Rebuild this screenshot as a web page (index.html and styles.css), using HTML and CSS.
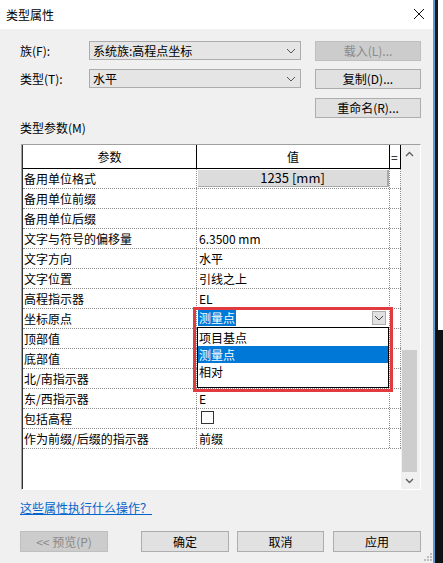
FILE: index.html
```html
<!DOCTYPE html>
<html lang="zh-CN">
<head>
<meta charset="utf-8">
<title>类型属性</title>
<link rel="stylesheet" href="styles.css">
</head>
<body>
<div class="screen">
  <div class="dialog">
    <div class="titlebar">
      <span class="title">类型属性</span>
      <svg class="close" width="12" height="12" viewBox="0 0 12 12"><path d="M1 1L11 11M11 1L1 11" stroke="#111" stroke-width="1" fill="none"/></svg>
    </div>
    <div class="content">
      <div class="row r1">
        <span class="label">族(F):</span>
        <div class="combo"><span>系统族:高程点坐标</span><svg width="10" height="6" viewBox="0 0 10 6"><path d="M1 1L5 5L9 1" stroke="#555" stroke-width="1" fill="none"/></svg></div>
        <div class="btn disabled side">载入(L)...</div>
      </div>
      <div class="row r2">
        <span class="label">类型(T):</span>
        <div class="combo"><span>水平</span><svg width="10" height="6" viewBox="0 0 10 6"><path d="M1 1L5 5L9 1" stroke="#555" stroke-width="1" fill="none"/></svg></div>
        <div class="btn side">复制(D)...</div>
      </div>
      <div class="row r3">
        <div class="btn side rename">重命名(R)...</div>
      </div>
      <div class="section-label">类型参数(M)</div>
      <div class="grid-wrap">
        <div class="grid">
          <div class="grow head"><div class="c1">参数</div><div class="c2 center">值</div><div class="c3">=</div></div>
          <div class="grow"><div class="c1">备用单位格式</div><div class="c2"><div class="unitbox">1235 [mm]</div></div><div class="c3"></div></div>
          <div class="grow"><div class="c1">备用单位前缀</div><div class="c2"></div><div class="c3"></div></div>
          <div class="grow"><div class="c1">备用单位后缀</div><div class="c2"></div><div class="c3"></div></div>
          <div class="grow"><div class="c1">文字与符号的偏移量</div><div class="c2">6.3500 mm</div><div class="c3"></div></div>
          <div class="grow"><div class="c1">文字方向</div><div class="c2">水平</div><div class="c3"></div></div>
          <div class="grow"><div class="c1">文字位置</div><div class="c2">引线之上</div><div class="c3"></div></div>
          <div class="grow"><div class="c1">高程指示器</div><div class="c2">EL</div><div class="c3"></div></div>
          <div class="grow"><div class="c1">坐标原点</div><div class="c2 editor"><span class="sel">测量点</span><span class="dropbtn"><svg width="10" height="6" viewBox="0 0 10 6"><path d="M1 1L5 5L9 1" stroke="#444" stroke-width="1" fill="none"/></svg></span></div><div class="c3"></div></div>
          <div class="grow"><div class="c1">顶部值</div><div class="c2"></div><div class="c3"></div></div>
          <div class="grow"><div class="c1">底部值</div><div class="c2"></div><div class="c3"></div></div>
          <div class="grow"><div class="c1">北/南指示器</div><div class="c2"></div><div class="c3"></div></div>
          <div class="grow"><div class="c1">东/西指示器</div><div class="c2">E</div><div class="c3"></div></div>
          <div class="grow"><div class="c1">包括高程</div><div class="c2"><span class="check"></span></div><div class="c3"></div></div>
          <div class="grow"><div class="c1">作为前缀/后缀的指示器</div><div class="c2">前缀</div><div class="c3"></div></div>
          <div class="dropdown-list">
            <div class="item">项目基点</div>
            <div class="item active">测量点</div>
            <div class="item">相对</div>
          </div>
          <div class="redbox"></div>
        </div>
        <div class="scrollbar">
          <div class="arrow"><svg width="9" height="6" viewBox="0 0 9 6"><path d="M1 5L4.5 1.5L8 5" stroke="#606060" stroke-width="1.4" fill="none"/></svg></div>
          <div class="track"></div>
          <div class="thumb"></div>
          <div class="arrow"><svg width="9" height="6" viewBox="0 0 9 6"><path d="M1 1L4.5 4.5L8 1" stroke="#606060" stroke-width="1.4" fill="none"/></svg></div>
        </div>
      </div>
      <a class="help" href="#">这些属性执行什么操作？</a>
      <div class="footer">
        <div class="btn disabled b-preview">&lt;&lt; 预览(P)</div>
        <div class="btn b-ok">确定</div>
        <div class="btn b-cancel">取消</div>
        <div class="btn b-apply">应用</div>
      </div>
      <svg class="grip" width="9" height="9" viewBox="0 0 9 9">
        <rect x="6" y="0" width="2" height="2" fill="#bdbdbd"/>
        <rect x="3" y="3" width="2" height="2" fill="#bdbdbd"/>
        <rect x="6" y="3" width="2" height="2" fill="#bdbdbd"/>
        <rect x="0" y="6" width="2" height="2" fill="#bdbdbd"/>
        <rect x="3" y="6" width="2" height="2" fill="#bdbdbd"/>
        <rect x="6" y="6" width="2" height="2" fill="#bdbdbd"/>
      </svg>
    </div>
  </div>
  <div class="edge"></div>
</div>
</body>
</html>
```

FILE: styles.css
```css
* { box-sizing: border-box; }
html, body { margin: 0; padding: 0; }
body {
  font-family: "Noto Sans CJK SC", "Noto Sans", sans-serif;
  font-size: 12px;
  color: #000;
  background: #fff;
}
.screen {
  display: flex;
  width: 443px;
  height: 563px;
  overflow: hidden;
}
.dialog {
  width: 433px;
  height: 563px;
  display: flex;
  flex-direction: column;
}
.edge {
  width: 10px;
  height: 563px;
  border-left: 2px solid #5b9bd8;
  background: linear-gradient(to right, #1b1b1b 3px, #ffffff 3px) top left / 100% 330px no-repeat, #111;
}
.titlebar {
  height: 29px;
  background: #fff;
  display: flex;
  align-items: center;
  justify-content: space-between;
  padding-left: 6px;
  padding-right: 8px;
}
.title { font-size: 12px; line-height: 16px; }
.close { display: block; margin-top: -2px; }
.content {
  flex: 1;
  background: #f0f0f0;
  padding: 12px 0 0 20px;
  position: relative;
}
.row {
  display: flex;
  align-items: flex-start;
  height: 20px;
}
.r2 { margin-top: 8px; }
.r3 { margin-top: 9px; }
.label {
  width: 69px;
  line-height: 19px;
}
.combo {
  width: 212px;
  height: 19px;
  background: #e5e5e5;
  border: 1px solid #acacac;
  display: flex;
  align-items: center;
  justify-content: space-between;
  padding: 0 4px 0 3px;
  line-height: 17px;
}
.combo svg { display: block; }
.btn {
  height: 20px;
  background: #e1e1e1;
  border: 1px solid #adadad;
  display: flex;
  align-items: center;
  justify-content: center;
  line-height: 18px;
}
.btn.disabled {
  background: #cccccc;
  border-color: #bfbfbf;
  color: #8a8a8a;
}
.side { width: 106px; margin-left: 14px; }
.rename { margin-left: 295px; }
.section-label {
  margin-top: 2px;
  line-height: 16px;
}
.grid-wrap {
  margin-top: 8px;
  margin-left: 1px;
  width: 400px;
  height: 346px;
  border-top: 1px solid #a0a0a0;
  border-left: 1px solid #a0a0a0;
  border-right: 1px solid #ffffff;
  border-bottom: 1px solid #ffffff;
  display: flex;
  padding-right: 2px;
}
.grid {
  width: 379px;
  height: 100%;
  background: #fff;
  border-left: 1px solid #333;
  position: relative;
}
.grow {
  display: grid;
  grid-template-columns: 174px 193px 11px;
  height: 20px;
  border-bottom: 1px dotted #8c8c8c;
}
.grow > div {
  border-right: 1px dotted #8c8c8c;
  line-height: 19px;
  white-space: nowrap;
  overflow: hidden;
}
.grow .c1 { padding-left: 1px; }
.grow .c2 { padding-left: 2px; }
.grow.head {
  height: 24px;
  border-bottom: 1px solid #000;
}
.grow.head > div {
  border-right: 1px solid #000;
  line-height: 23px;
}
.grow.head .c1, .grow.head .center { text-align: center; padding-left: 0; }
.grow.head .c3 { padding-left: 1px; }
.unitbox {
  margin: 1px 0 0 -1px;
  width: 191px;
  height: 17px;
  background: #dcdcdc;
  border-right: 2px solid #a9a9a9;
  border-bottom: 1px solid #a9a9a9;
  text-align: center;
  line-height: 16px;
  font-size: 13px;
}
.grow .c2.editor {
  display: flex;
  justify-content: space-between;
  align-items: flex-start;
  padding-left: 1px;
}
.sel {
  margin-top: 1px;
  background: #0078d7;
  color: #fff;
  line-height: 16px;
  height: 16px;
  padding: 0 1px;
}
.dropbtn {
  margin: 2px 3px 0 0;
  width: 14px;
  height: 14px;
  background: #e1e1e1;
  border: 1px solid #adadad;
  display: flex;
  align-items: center;
  justify-content: center;
}
.dropbtn svg { display: block; }
.check {
  display: block;
  margin: 2px 0 0 2px;
  width: 13px;
  height: 13px;
  border: 1px solid #333;
  background: #fff;
}
.dropdown-list {
  position: absolute;
  left: 174px;
  top: 182px;
  width: 192px;
  height: 61px;
  border: 1px solid #000;
  background: #fff;
  padding-top: 1px;
}
.item {
  height: 17px;
  line-height: 17px;
  padding-left: 1px;
}
.item.active {
  background: #0078d7;
  color: #fff;
}
.redbox {
  position: absolute;
  left: 170px;
  top: 162px;
  width: 200px;
  height: 85px;
  border: 3px solid #e23b3f;
}
.scrollbar {
  width: 17px;
  height: 100%;
  background: #f0f0f0;
  display: flex;
  flex-direction: column;
}
.arrow {
  height: 17px;
  display: flex;
  align-items: center;
  justify-content: center;
}
.arrow svg { display: block; }
.track { height: 188px; }
.thumb {
  height: 122px;
  margin: 0 1px;
  background: #cdcdcd;
}
.help {
  display: inline-block;
  margin-top: 10px;
  line-height: 16px;
  color: #0066cc;
  text-decoration: underline;
}
.footer {
  display: flex;
  margin-top: 15px;
}
.footer .btn { height: 21px; }
.b-preview { width: 88px; }
.b-ok { width: 88px; margin-left: 33px; }
.b-cancel { width: 87px; margin-left: 8px; }
.b-apply { width: 88px; margin-left: 9px; }
.grip {
  position: absolute;
  right: 0;
  bottom: 1px;
  display: block;
}
```
